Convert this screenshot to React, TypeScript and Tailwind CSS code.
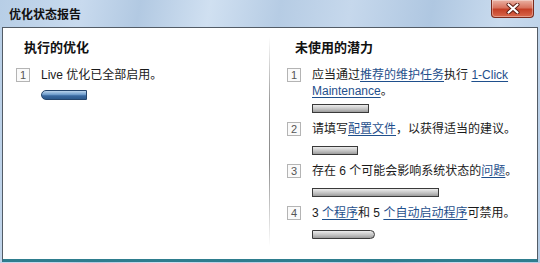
import React from 'react';

type Item = {
  n: number;
  body: React.ReactNode;
  bar: string;
  barTop: string;
};

const link = 'text-[#1f4f8c] underline underline-offset-[2px]';

const grayBar =
  'h-[9px] border border-[#3a3a3a] bg-[linear-gradient(to_bottom,#ececec,#c4c4c4_55%,#9c9c9c)]';

const items: Item[] = [
  {
    n: 1,
    body: (
      <>
        应当通过<span className={link}>推荐的维护任务</span>执行{' '}
        <span className={link}>
          1-Click
          <br />
          Maintenance
        </span>
        。
      </>
    ),
    bar: `${grayBar} w-[57px]`,
    barTop: 'mt-[5px]',
  },
  {
    n: 2,
    body: (
      <>
        请填写<span className={link}>配置文件</span>，以获得适当的建议。
      </>
    ),
    bar: `${grayBar} w-[46px]`,
    barTop: 'mt-[9px]',
  },
  {
    n: 3,
    body: (
      <>
        存在 6 个可能会影响系统状态的<span className={link}>问题</span>。
      </>
    ),
    bar: `${grayBar} w-[127px]`,
    barTop: 'mt-[9px]',
  },
  {
    n: 4,
    body: (
      <>
        3 <span className={link}>个程序</span>和 5 <span className={link}>个自动启动程序</span>可禁用。
      </>
    ),
    bar: `${grayBar} w-[63px] rounded-r-full`,
    barTop: 'mt-[9px]',
  },
];

function NumBox({ n }: { n: number }) {
  return (
    <div className="mt-[1px] flex h-[14px] w-[14px] shrink-0 items-center justify-center border border-[#b4b4b4] bg-[#fafafa] text-[11px] leading-none text-[#555]">
      {n}
    </div>
  );
}

function Row({ item }: { item: Item }) {
  return (
    <div className="flex gap-[11px]">
      <NumBox n={item.n} />
      <div className="flex flex-col">
        <div className="whitespace-nowrap text-[12px] leading-[16px] text-[#1a1a1a]">{item.body}</div>
        <div className={`${item.barTop} ${item.bar}`} />
      </div>
    </div>
  );
}

function CloseButton() {
  return (
    <div className="flex h-[18px] w-[43px] items-center justify-center rounded-b-[4px] border border-t-0 border-[#7b2a1c] bg-[linear-gradient(to_bottom,#eab2a4,#d8735e_45%,#c43f26_55%,#d9684c)] shadow-[inset_0_0_0_1px_rgba(255,255,255,0.35)]">
      <svg width="14" height="11" viewBox="0 0 14 11">
        <path d="M2.5 1.5 L11.5 9.5 M11.5 1.5 L2.5 9.5" stroke="#5a1a10" strokeWidth="4" strokeLinecap="round" />
        <path d="M2.5 1.5 L11.5 9.5 M11.5 1.5 L2.5 9.5" stroke="#ffffff" strokeWidth="2.2" strokeLinecap="round" />
      </svg>
    </div>
  );
}

export default function App() {
  return (
    <div
      className="flex h-[263px] w-[540px] flex-col overflow-hidden bg-[linear-gradient(100deg,#b7cee6_0%,#c8daee_14%,#b2c9e2_24%,#d0e0f1_36%,#b6cce4_48%,#c6d8ec_60%,#afc7e1_74%,#c9dbee_86%,#b4cbe4_100%)]"
      style={{ fontFamily: '"Liberation Sans", "Noto Sans CJK SC", sans-serif' }}
    >
      {/* title bar */}
      <div className="flex h-[27px] shrink-0 items-start justify-between">
        <span className="pl-[9px] pt-[7px] text-[12px] font-bold leading-[16px] text-[#111]">优化状态报告</span>
        <div className="mr-[6px]">
          <CloseButton />
        </div>
      </div>

      {/* body */}
      <div className="mx-[2px] mb-[1px] flex flex-1 border border-[#535c66] border-b-[3px] border-b-[#2e7d8e] bg-white">
        <div className="w-[266px] shrink-0 pl-[13px] pt-[12px]">
          <div className="pl-[8px] text-[13px] font-bold leading-[16px] text-[#111]">执行的优化</div>
          <div className="mt-[11px] flex gap-[11px]">
            <NumBox n={1} />
            <div className="flex flex-col">
              <div className="whitespace-nowrap text-[12px] leading-[16px] text-[#1a1a1a]">Live 优化已全部启用。</div>
              <div className="mt-[7px] h-[10px] w-[46px] rounded-l-full border border-[#24456d] bg-[linear-gradient(to_bottom,#b9d3ec,#6e9ccc_45%,#3a69a0_60%,#2c5a8e)]" />
            </div>
          </div>
        </div>

        <div className="mt-[9px] mb-[13px] w-px bg-[linear-gradient(to_bottom,#ffffff,#9c9c9c_30%,#8a8a8a_60%,#ffffff)]" />

        <div className="flex-1 pl-[17px] pt-[12px]">
          <div className="pl-[8px] text-[13px] font-bold leading-[16px] text-[#111]">未使用的潜力</div>
          <div className="mt-[11px] flex flex-col gap-[8px]">
            {items.map((it) => (
              <Row key={it.n} item={it} />
            ))}
          </div>
        </div>
      </div>
    </div>
  );
}
